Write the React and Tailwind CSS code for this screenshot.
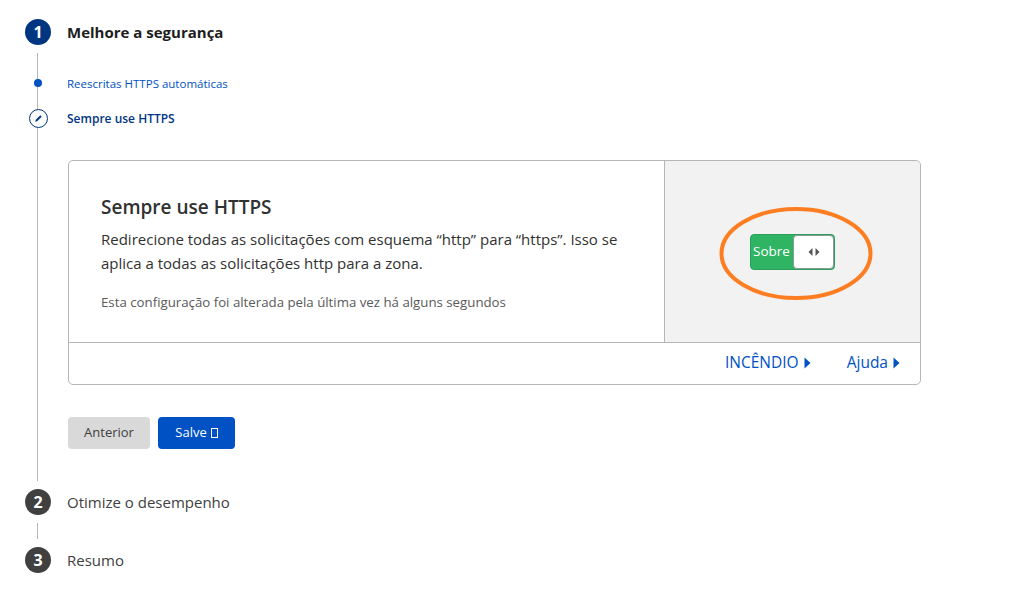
import React from "react";

const font = { fontFamily: '"Open Sans", sans-serif' };

const Caret = () => (
  <svg width="7" height="12" viewBox="0 0 7 12" className="ml-[5px] inline-block">
    <path d="M0.5 0.5 L6.5 6 L0.5 11.5 Z" fill="#0051c3" />
  </svg>
);

const StepBadge = ({ n, active }) => (
  <div
    className={`flex h-[26px] w-[26px] shrink-0 items-center justify-center rounded-full text-[16px] font-bold text-white ${
      active ? "bg-[#003681]" : "bg-[#404041]"
    }`}
  >
    {n}
  </div>
);

const App = () => {
  return (
    <div className="h-[602px] w-[1022px] overflow-hidden bg-white pl-[25px] pt-[19px] text-[#313131]" style={font}>
      {/* step 1 */}
      <div className="flex h-[26px] items-center gap-[16px]">
        <StepBadge n="1" active />
        <h2 className="text-[15px] font-bold text-[#1d1d1d]">Melhore a segurança</h2>
      </div>

      <div className="relative ml-[12px] mt-[8px] h-[428px] border-l border-[#b6b6b6] pl-[30px]">
        <div className="relative flex h-[22px] translate-y-[20px] items-center">
          <span className="absolute left-[-34.5px] top-[6px] h-[8px] w-[8px] rounded-full bg-[#0051c3]" />
          <a className="-ml-[1px] text-[11.5px] text-[#0051c3]">Reescritas HTTPS automáticas</a>
        </div>

        <div className="relative mt-[31px] flex h-[20px] translate-y-[3px] items-center">
          <span className="absolute left-[-39.5px] top-[0px] flex h-[19px] w-[19px] items-center justify-center rounded-full border border-[#003681] bg-white">
            <svg width="11" height="11" viewBox="0 0 11 11">
              <path d="M2.2 8.8 L2.8 6.8 L7.3 2.3 L8.7 3.7 L4.2 8.2 Z" fill="#003681" />
            </svg>
          </span>
          <span className="-ml-[1px] text-[12px] font-semibold text-[#003681]">Sempre use HTTPS</span>
        </div>

        {/* card */}
        <div className="mt-[34px] flex h-[225px] w-[853px] flex-col rounded-[5px] border border-[#b6b6b6] bg-white">
          <div className="flex h-[182px] border-b border-[#b6b6b6]">
            <div className="w-[596px] border-r border-[#b6b6b6] pl-[32px] pt-[33px]">
              <h3 className="text-[19px] font-semibold leading-[26px] text-[#313131]">Sempre use HTTPS</h3>
              <p className="mt-[7px] w-[525px] text-[15px] leading-[24px] text-[#313131]">
                Redirecione todas as solicitações com esquema “http” para “https”. Isso se aplica a todas as solicitações http para a zona.
              </p>
              <p className="mt-[18px] text-[13.25px] leading-[18px] text-[#595959]">
                Esta configuração foi alterada pela última vez há alguns segundos
              </p>
            </div>
            <div className="relative flex flex-1 items-center justify-center rounded-tr-[5px] bg-[#f2f2f2]">
              <div className="flex h-[36px] w-[85px] overflow-hidden rounded-[4px] border border-[#2c9e5c] bg-[#2fb463]">
                <span className="flex w-[42px] items-center pl-[2px] text-[13.5px] text-white">Sobre</span>
                <span className="flex flex-1 items-center justify-center rounded-[4px] border border-[#8a9a94] bg-white">
                  <svg width="12" height="8" viewBox="0 0 12 8">
                    <path d="M4.5 0 L0.5 4 L4.5 8 Z M7.5 0 L11.5 4 L7.5 8 Z" fill="#555" />
                  </svg>
                </span>
              </div>
              {/* orange highlight */}
              <svg className="absolute left-[54px] top-[45px]" width="154" height="95" viewBox="0 0 154 95">
                <ellipse cx="77" cy="47.5" rx="74.5" ry="44.5" fill="none" stroke="#fd7e22" strokeWidth="4" />
              </svg>
            </div>
          </div>
          <div className="flex flex-1 -translate-y-[1px] items-center justify-end gap-[36px] pr-[20px] text-[15.5px] text-[#0051c3]">
            <a className="flex items-center">INCÊNDIO<Caret /></a>
            <a className="flex items-center">Ajuda<Caret /></a>
          </div>
        </div>

        {/* buttons */}
        <div className="mt-[32px] flex gap-[8px]">
          <button className="h-[32px] w-[82px] rounded-[4px] bg-[#d9d9d9] text-[13px] text-[#404041]">Anterior</button>
          <button className="flex h-[32px] w-[77px] items-center justify-center gap-[4px] rounded-[4px] bg-[#0051c3] text-[13px] text-white">
            Salve
            <span className="h-[10px] w-[7px] border border-white" />
          </button>
        </div>
      </div>

      {/* step 2 */}
      <div className="mt-[8px] flex h-[26px] items-center gap-[16px]">
        <StepBadge n="2" />
        <span className="text-[15px] text-[#404041]">Otimize o desempenho</span>
      </div>
      <div className="ml-[12px] mt-[8px] h-[16px] border-l border-[#b6b6b6]" />
      {/* step 3 */}
      <div className="mt-[8px] flex h-[26px] items-center gap-[16px]">
        <StepBadge n="3" />
        <span className="text-[15px] text-[#404041]">Resumo</span>
      </div>
    </div>
  );
};

export default App;
